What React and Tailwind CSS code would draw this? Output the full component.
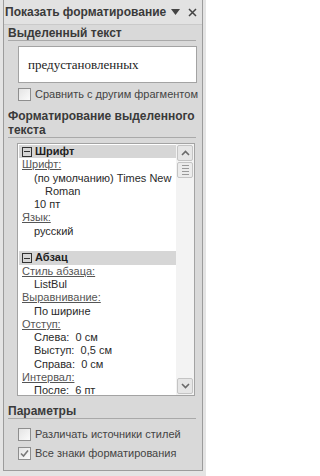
const font = { fontFamily: '"Liberation Sans", Arial, sans-serif' };

function CheckBox({ checked }) {
  return (
    <span className="flex h-[13px] w-[13px] shrink-0 items-center justify-center border border-[#8e8e8e] bg-gradient-to-br from-[#e4e4e4] to-[#fbfbfb]">
      {checked && (
        <svg width="9" height="9" viewBox="0 0 9 9">
          <path d="M1 4.5 L3.5 7 L8 1.5" fill="none" stroke="#7a7a7a" strokeWidth="1.6" />
        </svg>
      )}
    </span>
  );
}

function Heading({ children }) {
  return (
    <div className="ml-[4px] mr-[6px] border-b border-[#a9a9a9] text-[12px] font-bold leading-[14px] text-[#3a3a3a]">
      {children}
    </div>
  );
}

function CheckRow({ checked, className, children }) {
  return (
    <div className={`ml-[14px] flex h-[13px] items-center gap-[4px] text-[11px] leading-[13px] text-[#444] ${className}`}>
      <CheckBox checked={checked} />
      <span>{children}</span>
    </div>
  );
}

function GroupHeader({ title }) {
  return (
    <div className="flex h-[13.3px] items-center gap-[3px] bg-[#d6d6d6] pl-[3px] text-[11px] font-bold text-[#1e1e1e]">
      <span className="flex h-[10px] w-[10px] items-center justify-center border border-[#333]">
        <span className="h-px w-[6px] bg-[#333]" />
      </span>
      {title}
    </div>
  );
}

function Label({ children }) {
  return <div className="pl-[3px] text-[#555] underline underline-offset-[1px]">{children}</div>;
}

function Value({ children, indent = "pl-[15px]" }) {
  return <div className={`${indent} text-[#2a2a2a]`}>{children}</div>;
}

function ScrollButton({ down }) {
  return (
    <div className="flex h-[16px] items-center justify-center rounded-[2px] border border-[#c4c4c4] bg-[#e6e6e6]">
      <svg width="9" height="6" viewBox="0 0 9 6">
        <path d={down ? "M1 1 L4.5 4.5 L8 1" : "M1 5 L4.5 1.5 L8 5"} fill="none" stroke="#6a6a6a" strokeWidth="1.6" />
      </svg>
    </div>
  );
}

export default function App() {
  return (
    <div className="h-[476px] w-[206px] bg-[#e4e4e4] px-[3px] pb-[5px]" style={font}>
      <div className="flex h-full flex-col border-x border-b border-[#9c9c9c] bg-[#d9d9d9]">
        <div className="flex h-[25px] shrink-0 items-center border-b border-[#cacaca] bg-[#e2e2e2] pl-[1px] pr-[5px]">
          <span className="text-[12px] font-bold text-[#3a3a3a]">Показать форматирование</span>
          <svg className="ml-auto" width="9" height="6" viewBox="0 0 9 6">
            <path d="M0 0 H9 L4.5 6 Z" fill="#444" />
          </svg>
          <svg className="ml-[8px]" width="9" height="9" viewBox="0 0 9 9">
            <path d="M1 1 L8 8 M8 1 L1 8" stroke="#444" strokeWidth="1.5" />
          </svg>
        </div>

        <div className="mt-[1px]">
          <Heading>Выделенный текст</Heading>
        </div>
        <div
          className="ml-[14px] mr-[5px] mt-[5px] flex h-[37px] shrink-0 items-center border border-[#a3a3a3] bg-white pl-[9px] text-[13px] text-[#222]"
          style={{ fontFamily: '"Liberation Serif", "Times New Roman", serif' }}
        >
          предустановленных
        </div>
        <CheckRow className="mt-[5px]">Сравнить с другим фрагментом</CheckRow>

        <div className="mt-[8px]">
          <Heading>Форматирование выделенного текста</Heading>
        </div>

        <div className="ml-[13px] mr-[7px] mt-[5px] flex h-[253px] shrink-0 border border-[#a3a3a3] bg-white">
          <div className="flex-1 overflow-hidden pl-[1px] pt-px text-[11px] leading-[13.3px]">
            <GroupHeader title="Шрифт" />
            <Label>Шрифт:</Label>
            <Value>(по умолчанию) Times New</Value>
            <Value indent="pl-[26px]">Roman</Value>
            <Value>10 пт</Value>
            <Label>Язык:</Label>
            <Value>русский</Value>
            <div className="h-[13.3px]" />
            <GroupHeader title="Абзац" />
            <Label>Стиль абзаца:</Label>
            <Value>ListBul</Value>
            <Label>Выравнивание:</Label>
            <Value>По ширине</Value>
            <Label>Отступ:</Label>
            <Value>Слева:&nbsp; 0 см</Value>
            <Value>Выступ:&nbsp; 0,5 см</Value>
            <Value>Справа:&nbsp; 0 см</Value>
            <Label>Интервал:</Label>
            <Value>После:&nbsp; 6 пт</Value>
          </div>
          <div className="flex w-[18px] flex-col bg-[#f3f3f3] p-px">
            <ScrollButton />
            <div className="mt-px flex h-[16px] flex-col items-center justify-center gap-[2px] rounded-[2px] border border-[#c4c4c4] bg-[#ececec]">
              <span className="h-px w-[7px] bg-[#9a9a9a]" />
              <span className="h-px w-[7px] bg-[#9a9a9a]" />
              <span className="h-px w-[7px] bg-[#9a9a9a]" />
              <span className="h-px w-[7px] bg-[#9a9a9a]" />
            </div>
            <div className="flex-1" />
            <ScrollButton down />
          </div>
        </div>

        <div className="mt-[8px]">
          <Heading>Параметры</Heading>
        </div>
        <CheckRow className="mt-[9px]">Различать источники стилей</CheckRow>
        <CheckRow checked className="mt-[6px]">Все знаки форматирования</CheckRow>
      </div>
    </div>
  );
}
